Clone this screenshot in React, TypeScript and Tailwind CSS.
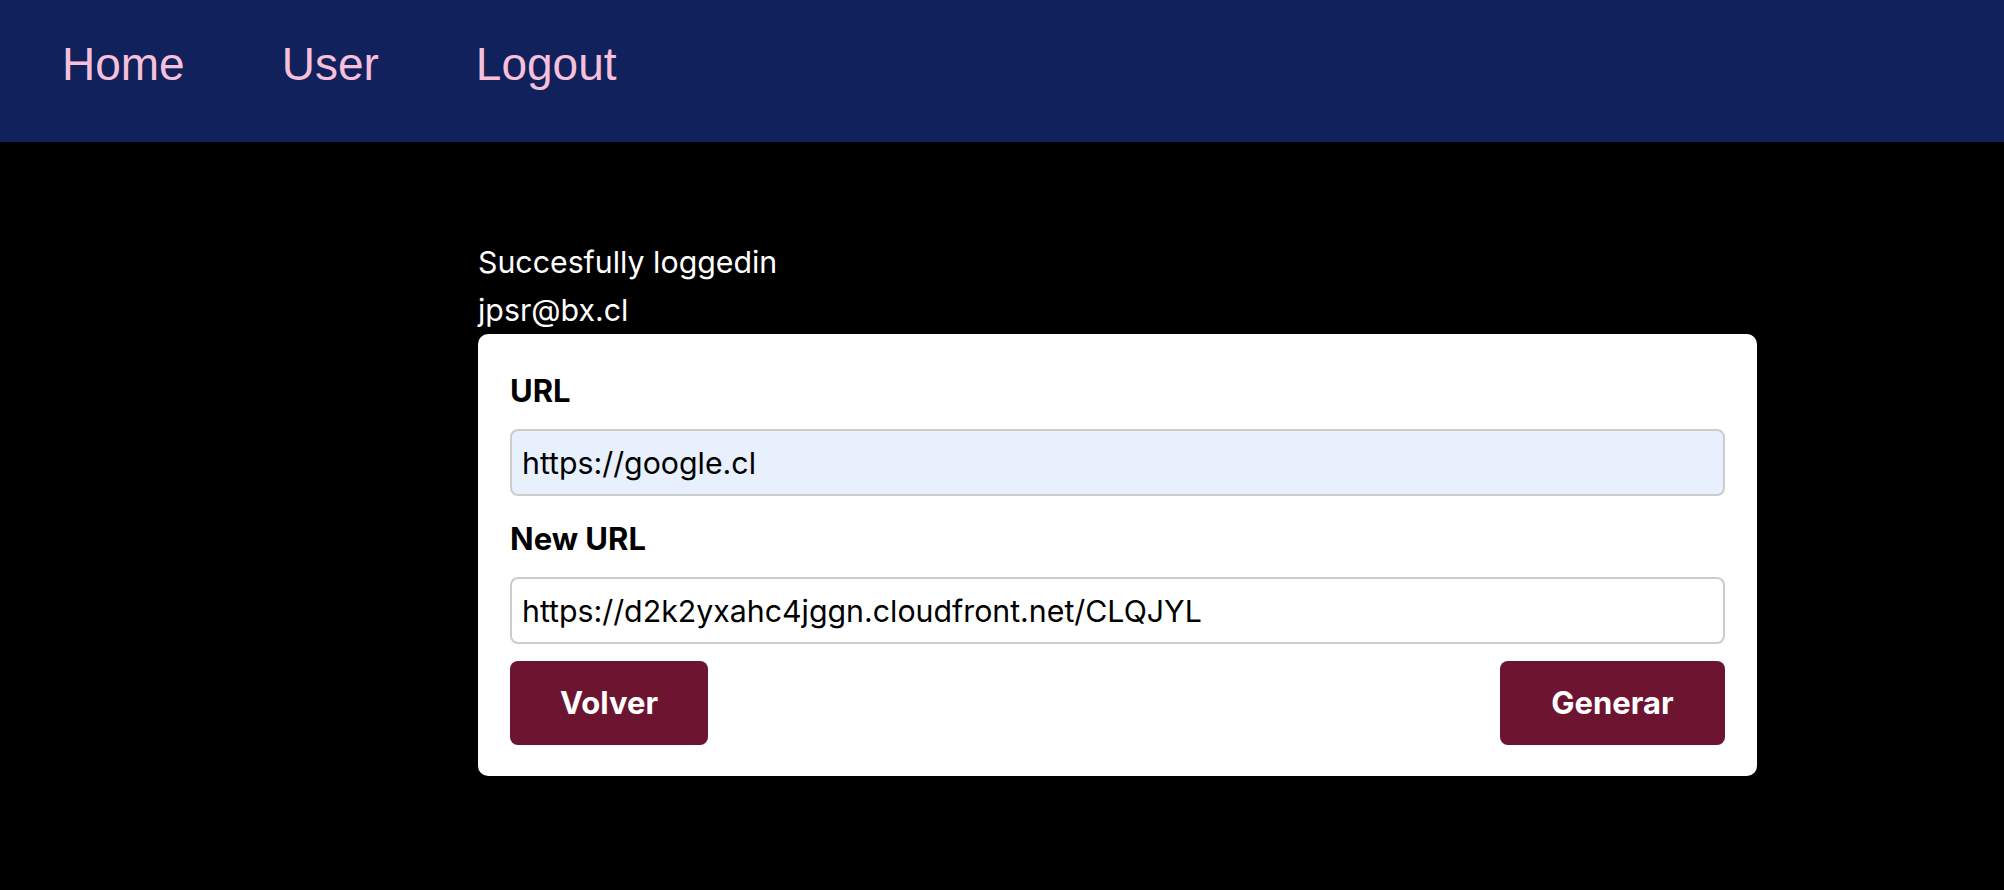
const NavLink = ({ label }: { label: string }) => {
  return (
    <a href="#" className="text-[#f6c0da] text-[46px] leading-[52px] no-underline">
      {label}
    </a>
  );
};

const Field = ({
  label,
  value,
  filled,
  first,
}: {
  label: string;
  value: string;
  filled?: boolean;
  first?: boolean;
}) => {
  return (
    <div className={first ? "mt-[3px]" : "mt-[21px]"}>
      <label className="block font-bold text-black text-[31px] leading-[44px]">{label}</label>
      <input
        readOnly
        value={value}
        className={
          "mt-[16px] block w-full h-[67px] px-[10px] border-2 border-[#cccccc] rounded-[8px] text-[30.3px] text-black outline-none " +
          (filled ? "bg-[#e8f0fe]" : "bg-white")
        }
      />
    </div>
  );
};

export default function App() {
  return (
    <div className="h-[890px] overflow-hidden bg-black font-['Inter',sans-serif]">
      <nav className="h-[142px] bg-[#10215c] flex items-start pt-[38px] pl-[62px] gap-[97px] font-['Liberation_Sans',Arial,sans-serif]">
        <NavLink label="Home" />
        <NavLink label="User" />
        <NavLink label="Logout" />
      </nav>

      <main className="pt-[96px] pl-[478px]">
        <p className="text-white text-[30.3px] leading-[48px]">Succesfully loggedin</p>
        <p className="text-white text-[30.3px] leading-[48px]">jpsr@bx.cl</p>

        <div className="w-[1279px] bg-white rounded-[10px] px-8 pt-8 pb-[31px]">
          <Field label="URL" value="https://google.cl" filled first />
          <Field label="New URL" value="https://d2k2yxahc4jggn.cloudfront.net/CLQJYL" />
          <div className="mt-[17px] flex justify-between">
            <button className="h-[84px] w-[198px] bg-[#6d1431] text-white font-bold text-[31px] rounded-[8px]">
              Volver
            </button>
            <button className="h-[84px] w-[225px] bg-[#6d1431] text-white font-bold text-[31px] rounded-[8px]">
              Generar
            </button>
          </div>
        </div>
      </main>
    </div>
  );
}
